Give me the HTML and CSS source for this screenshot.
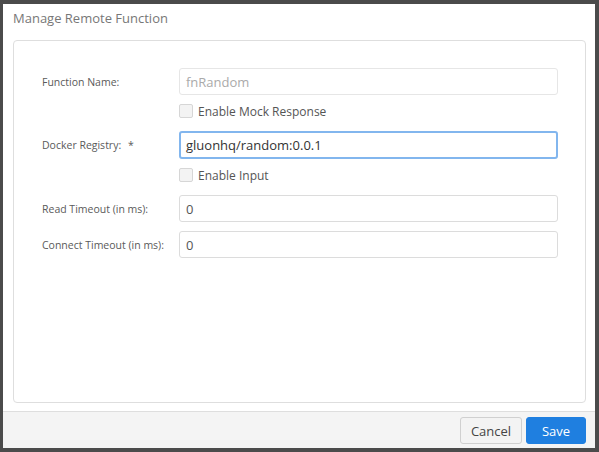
FILE: index.html
```html
<!DOCTYPE html>
<html>
<head>
<meta charset="utf-8">
<link rel="stylesheet" href="styles.css">
</head>
<body>
<div class="dialog">
  <div class="title">Manage Remote Function</div>
  <div class="body">
    <div class="panel">
      <div class="row">
        <div class="label">Function Name:</div>
        <div class="field disabled">fnRandom</div>
      </div>
      <div class="row check-row">
        <div class="label"></div>
        <label class="check"><span class="box"></span><span>Enable Mock Response</span></label>
      </div>
      <div class="row r-docker">
        <div class="label">Docker Registry: <span class="req">*</span></div>
        <div class="field focus">gluonhq/random:0.0.1</div>
      </div>
      <div class="row check-row">
        <div class="label"></div>
        <label class="check"><span class="box"></span><span>Enable Input</span></label>
      </div>
      <div class="row r-read">
        <div class="label">Read Timeout (in ms):</div>
        <div class="field">0</div>
      </div>
      <div class="row r-connect">
        <div class="label">Connect Timeout (in ms):</div>
        <div class="field short">0</div>
      </div>
    </div>
  </div>
  <div class="footer">
    <button class="btn cancel">Cancel</button>
    <button class="btn save">Save</button>
  </div>
</div>
</body>
</html>
```

FILE: styles.css
```css
html, body {
  margin: 0;
  padding: 0;
  background: #4b4b4b;
  font-family: "Open Sans", "DejaVu Sans", sans-serif;
}
.dialog {
  margin: 4px 4px 4px 3px;
  width: 592px;
  height: 444px;
  background: #fff;
  display: flex;
  flex-direction: column;
}
.title {
  height: 36px;
  box-sizing: border-box;
  padding: 5px 0 0 10px;
  font-size: 13px;
  color: #777;
}
.body {
  flex: 1;
  padding: 0 9px 8px 10px;
  display: flex;
}
.panel {
  flex: 1;
  border: 1px solid #dedede;
  border-radius: 4px;
  padding: 27px 27px 0 28px;
  display: flex;
  flex-direction: column;
}
.row {
  display: flex;
  align-items: center;
}
.label {
  width: 137px;
  flex: none;
  font-size: 10.5px;
  color: #5a5a5a;
}
.req {
  margin-left: 4px;
}
.field {
  flex: 1;
  height: 25px;
  border: 1px solid #dcdcdc;
  border-radius: 3px;
  box-sizing: content-box;
  display: flex;
  align-items: center;
  padding-left: 6px;
  font-size: 13px;
  color: #555;
}
.field.disabled {
  color: #aaa;
  border-color: #e6e6e6;
}
.field.focus {
  height: 24px;
  border: 2px solid #82b6ee;
  padding-left: 5px;
  color: #333;
}
.check-row {
  margin-top: 6px;
  height: 20px;
}
.check {
  display: flex;
  align-items: center;
  font-size: 12px;
  color: #555;
}
.box {
  width: 12px;
  height: 12px;
  border: 1px solid #d6d6d6;
  border-radius: 2px;
  background: #f3f3f3;
  margin-right: 5px;
}
.r-docker { margin-top: 10px; }
.r-read { margin-top: 10px; }
.r-connect { margin-top: 9px; }
.footer {
  height: 37px;
  border-top: 1px solid #dedede;
  background: #f4f4f4;
  display: flex;
  justify-content: flex-end;
  align-items: flex-start;
  padding: 5px 9px 0 0;
  box-sizing: border-box;
  gap: 4px;
}
.btn {
  height: 27px;
  font-family: "Open Sans", "DejaVu Sans", sans-serif;
  font-size: 13px;
  border-radius: 3px;
  padding: 0;
}
.cancel {
  width: 62px;
  background: #f3f3f3;
  border: 1px solid #d0d0d0;
  color: #444;
}
.save {
  width: 60px;
  background: #1f7fe0;
  border: 1px solid #1f7fe0;
  color: #fff;
}
```
